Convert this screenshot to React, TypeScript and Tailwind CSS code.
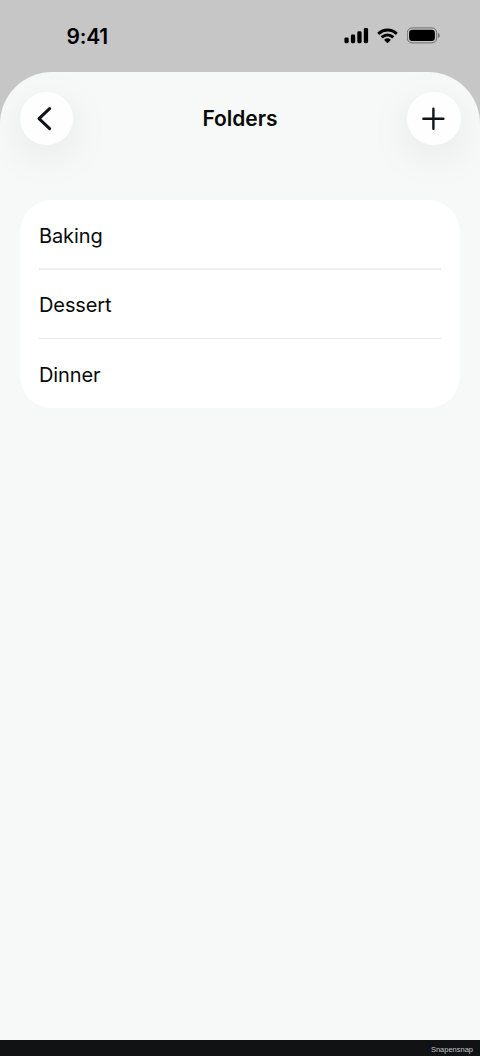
import { ReactNode } from 'react'

const folders = ['Baking', 'Dessert', 'Dinner']

function StatusBar() {
  return (
    <div className="flex h-[72px] shrink-0 items-start justify-between pl-[66.5px] pr-10 text-black">
      <span className="mt-[23px] text-[21px] leading-7 font-semibold tracking-[-0.2px]">9:41</span>
      <div className="mt-[27px] flex h-[17px] items-center">
        <svg width="25" height="17" viewBox="0 0 25 17" fill="currentColor">
          <rect x="0.4" y="10.4" width="4.3" height="5.8" rx="1.4" />
          <rect x="6.9" y="7.6" width="4.3" height="8.6" rx="1.4" />
          <rect x="13.3" y="4.3" width="4.3" height="11.9" rx="1.4" />
          <rect x="19.8" y="1" width="4.3" height="15.2" rx="1.4" />
        </svg>
        <svg className="ml-2" width="21" height="16" viewBox="0 0 17 12.4" fill="currentColor">
          <path d="M8.5 2.6c2.4 0 4.7.9 6.4 2.5.1.1.3.1.5 0l1.2-1.3c.1-.1.1-.4 0-.5A11.8 11.8 0 0 0 .4 3.3c-.1.1-.1.4 0 .5l1.2 1.3c.2.1.4.1.5 0a9.4 9.4 0 0 1 6.4-2.5z" />
          <path d="M8.5 6.7c1.3 0 2.6.5 3.5 1.4.2.1.4.1.5 0l1.3-1.3c.1-.1.1-.4 0-.5a7.7 7.7 0 0 0-10.6 0c-.1.1-.1.4 0 .5l1.3 1.3c.1.1.3.1.5 0 .9-.9 2.2-1.4 3.5-1.4z" />
          <path d="M11 9.6c.1-.1.1-.4 0-.5a4 4 0 0 0-5 0c-.1.1-.1.4 0 .5l2.2 2.2c.2.2.4.2.6 0z" />
        </svg>
        <svg className="ml-[9px]" width="33" height="17" viewBox="0 0 33 17" fill="none">
          <rect x="0.3" y="0.9" width="29.4" height="15" rx="4.8" stroke="black" strokeOpacity="0.45" />
          <rect x="2.1" y="2.7" width="25.8" height="11.4" rx="3.3" fill="black" />
          <path d="M31.1 6v5c1-.4 1.5-1.4 1.5-2.5S32.1 6.4 31.1 6z" fill="black" fillOpacity="0.5" />
        </svg>
      </div>
    </div>
  )
}

function RoundButton({ label, children }: { label: string; children: ReactNode }) {
  return (
    <button
      aria-label={label}
      className="flex size-[53.5px] items-center justify-center rounded-full bg-[#fefefe] text-[#111315] shadow-[0_11px_44px_rgba(0,0,0,0.08)]"
    >
      {children}
    </button>
  )
}

function Header() {
  return (
    <header className="flex items-center justify-between px-[19.5px] pt-[19.5px]">
      <RoundButton label="Back">
        <svg className="shrink-0" width="54" height="54" viewBox="0 0 54 54" fill="none" stroke="currentColor" strokeWidth="3" strokeLinecap="round" strokeLinejoin="round">
          <path d="M30.6 17.6 20 27.6 30.6 37.6" />
        </svg>
      </RoundButton>
      <h1 className="pt-[1.5px] text-[21px] leading-7 font-semibold tracking-[-0.05px] text-[#080a09]">Folders</h1>
      <RoundButton label="Add folder">
        <svg className="shrink-0" width="54" height="54" viewBox="0 0 54 54" fill="none" stroke="currentColor" strokeWidth="2.4" strokeLinecap="round">
          <path d="M26.4 17.7v20M16.4 27.7h20" />
        </svg>
      </RoundButton>
    </header>
  )
}

export default function App() {
  return (
    <div className="flex h-[1056px] w-[480px] flex-col overflow-hidden bg-[#c6c6c6] font-[Inter,'Liberation_Sans',sans-serif]">
      <StatusBar />
      <main className="flex-1 overflow-hidden rounded-t-[52px] bg-[#f6f9f8]">
        <Header />
        <ul className="relative mx-5 mt-[55px] h-[208px] rounded-[32px] bg-white px-[19px]">
          {folders.map((name) => (
            <li
              key={name}
              className="flex h-[69px] items-center border-b border-[#e6e8e8] pt-[2px] text-[20px] leading-7 tracking-[-0.1px] text-[#080a09] first:h-[70px] first:border-b-2 first:border-[#efefef] first:pt-1 last:border-b-0"
            >
              {name}
            </li>
          ))}
        </ul>
      </main>
      <footer className="flex h-4 shrink-0 items-center justify-end bg-[#111214] pt-[3px] pr-[7px] font-['Liberation_Sans',sans-serif] text-[7.5px] leading-none text-[#c4c4c6]">
        Snapensnap
      </footer>
    </div>
  )
}
